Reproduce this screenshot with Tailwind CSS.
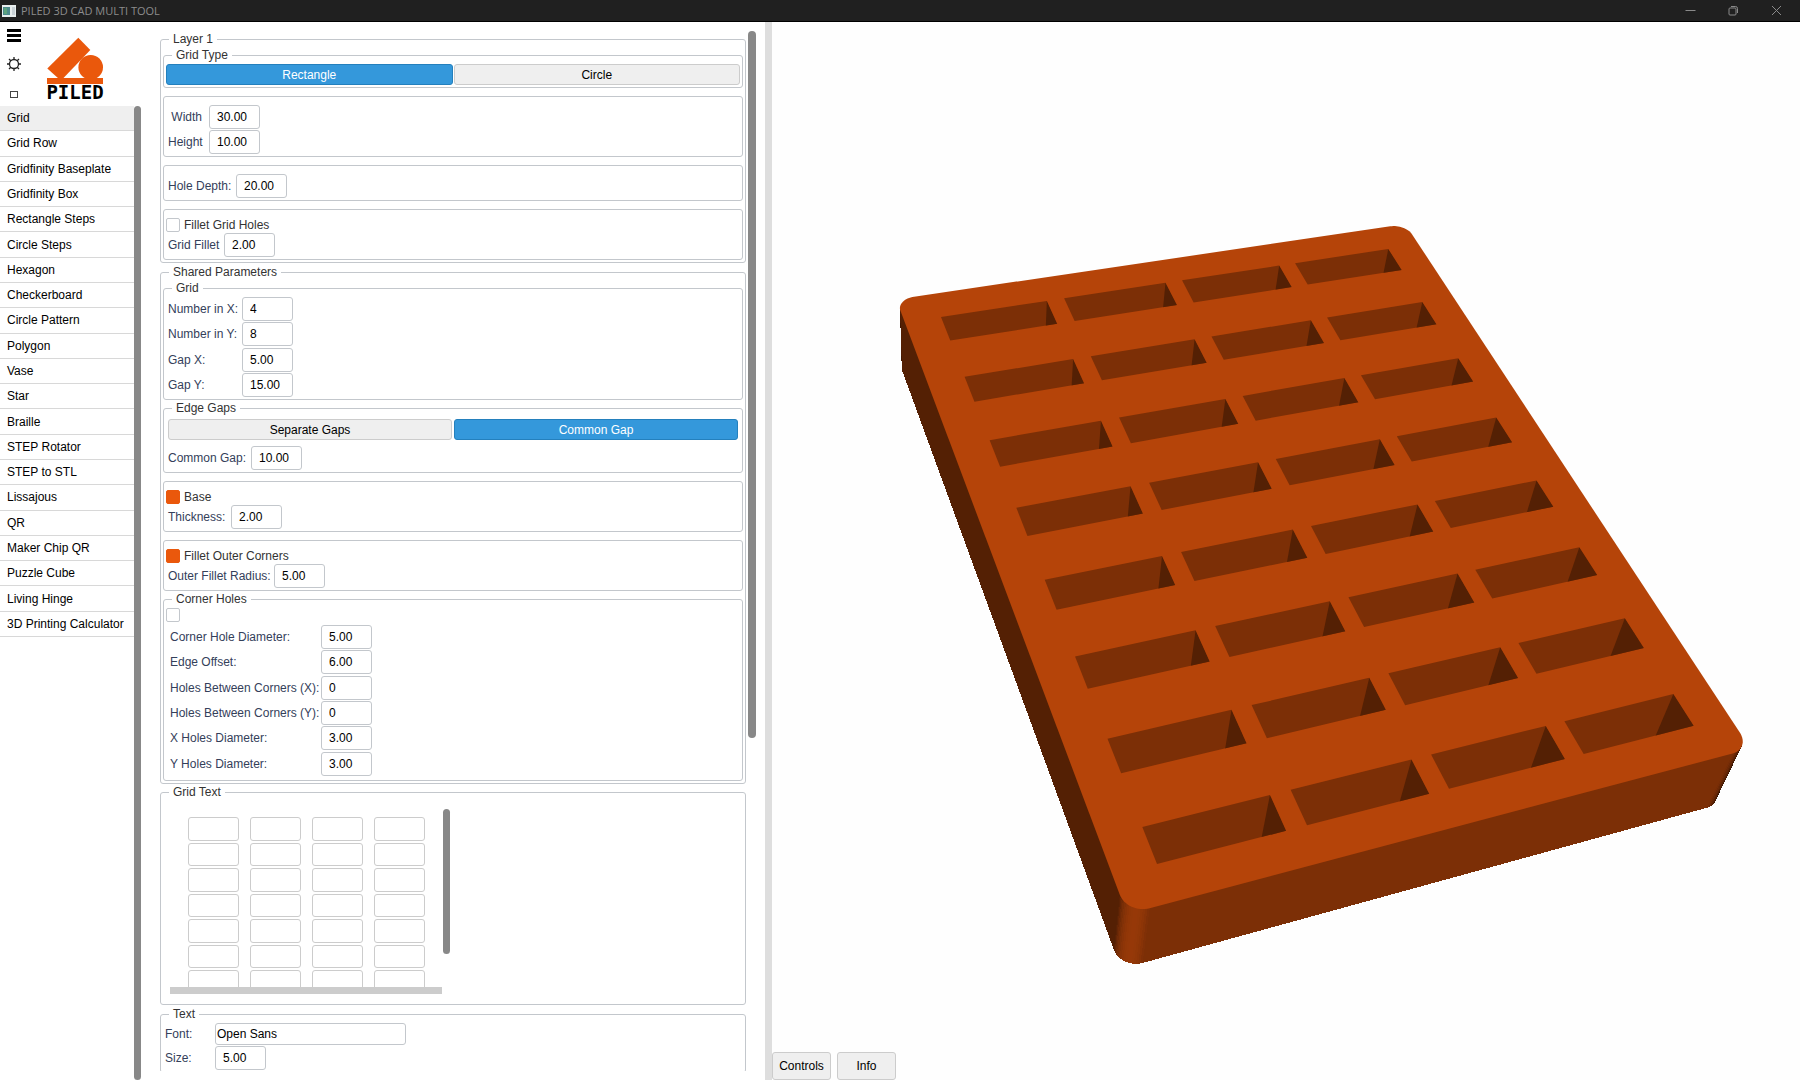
<!DOCTYPE html>
<html lang="en">
<head>
    <meta charset="UTF-8">
    <meta content="width=device-width, initial-scale=1.0" name="viewport">
    <title>PILED 3D CAD MULTI TOOL</title>
    <script src="https://cdn.jsdelivr.net/npm/@tailwindcss/browser@4"></script>
</head>
<body class="flex flex-col h-screen overflow-hidden bg-white text-black text-[12px] leading-[14px] font-['Liberation_Sans',Arial,sans-serif]">
<header class="flex items-center justify-between h-[22px] shrink-0 bg-[#202020] border-b border-black">
    <div class="flex items-center gap-[5px] pl-[2px]">
        <svg class="w-[14px] h-[12px]" viewBox="0 0 14 12">
            <rect width="14" height="12" fill="#e8eeee"/>
            <rect x="1" y="2" width="7" height="8" fill="#4d8a8c"/>
            <rect x="2" y="3" width="3" height="6" fill="#5da37d"/>
            <rect x="10" y="2" width="3" height="8" fill="#c9d2d6"/>
        </svg>
        <h1 class="text-[#8c8c8c] text-[11px] font-['Open_Sans',sans-serif]">PILED 3D CAD MULTI TOOL</h1>
    </div>
    <div class="flex pr-[2px] text-[#8a8a8a]">
        <button aria-label="Minimize" class="w-[43px] flex justify-center">
            <svg class="size-[11px]" viewBox="0 0 11 11" fill="none" stroke="currentColor"><path d="M0.5 5.500h10"/></svg>
        </button>
        <button aria-label="Restore" class="w-[43px] flex justify-center">
            <svg class="size-[11px]" viewBox="0 0 11 11" fill="none" stroke="currentColor"><rect x="1" y="3" width="7" height="7" rx="1"/><path d="M3 1.500h4.500a2 2 0 0 1 2 2v4.500"/></svg>
        </button>
        <button aria-label="Close" class="w-[43px] flex justify-center">
            <svg class="size-[11px]" viewBox="0 0 11 11" fill="none" stroke="currentColor"><path d="M1 1l9 9M10 1l-9 9"/></svg>
        </button>
    </div>
</header>

<div class="flex flex-1 min-h-0">
    <!-- Sidebar -->
    <aside class="w-[142px] shrink-0 flex flex-col">
        <div class="flex h-[84px] shrink-0">
            <div class="flex flex-col items-center w-7">
                <button aria-label="Menu" class="h-[26px] pt-[2px]">
                    <svg class="w-[14px] h-[14px]" viewBox="0 0 14 14"><path d="M0 0h14v3H0zM0 5h14v3H0zM0 10h14v3H0z"/></svg>
                </button>
                <button aria-label="Theme" class="h-[32px]">
                    <svg class="size-[14px]" viewBox="0 0 14 14" fill="none" stroke="#222" stroke-width="1.300"><circle cx="7" cy="7" r="4.500"/><path d="M7 0v2.500M7 11.500v2.500M0 7h2.500M11.500 7h2.500M2 2l1.800 1.800M10.200 10.200L12 12M12 2l-1.800 1.800M3.800 10.200L2 12"/></svg>
                </button>
                <button aria-label="Window" class="h-[26px] pt-[2px]">
                    <svg class="w-[8px] h-[7px]" viewBox="0 0 8 7" fill="none" stroke="#444"><rect x="0.5" y="0.5" width="7" height="6"/></svg>
                </button>
            </div>
            <svg class="w-[60px] h-[66px] ml-[17px] mt-[14px]" viewBox="45 36 60 66">
                <g fill="#ea580c">
                    <path d="M78.300 37.700L90.300 50 63 78.500H58.500L47.300 68.500z"/>
                    <circle cx="90.700" cy="67.300" r="12.300"/>
                    <rect x="47" y="78" width="56" height="6"/>
                </g>
                <text x="75" y="99" text-anchor="middle" font-family="DejaVu Sans Mono, monospace" font-weight="bold" font-size="19">PILED</text>
            </svg>
        </div>
        <div class="flex flex-1 min-h-0">
            <ul class="grid h-[531px] flex-1 auto-rows-fr" id="toolList"></ul>
            <div class="w-[7px] mr-px rounded-full bg-[#888]"></div>
        </div>
    </aside>

    <!-- Parameters -->
    <main class="w-[623px] shrink-0 flex pl-[18px] pt-[9px] pb-[9px] gap-[2px]">
        <form class="w-[586px] h-full overflow-hidden pt-px">
            <fieldset class="border border-[#c3c7cc] rounded-[3px] px-[2px] pt-[2px] pb-[2px]">
                <legend class="ml-[6px] px-[4px] text-[#333]">Layer 1</legend>
                <fieldset class="border border-[#c3c7cc] rounded-[3px] px-[2px] pt-[2px] pb-[2px]">
                    <legend class="ml-[6px] px-[4px] text-[#333]">Grid Type</legend>
                    <div class="grid grid-cols-2 gap-px">
                        <button type="button" aria-pressed="true" class="h-[21px] rounded-[3px] border border-[#2480bd] bg-[#3498db] text-white">Rectangle</button>
                        <button type="button" aria-pressed="false" class="h-[21px] rounded-[3px] border border-[#ccc] bg-[#efefef]">Circle</button>
                    </div>
                </fieldset>
                <div class="mt-2 border border-[#c3c7cc] rounded-[3px] px-[4px] pt-2 pb-[2px] grid gap-px">
                    <div class="flex items-center gap-[7px]">
                        <label for="width" class="w-[34px] text-right text-[#34405a]">Width</label>
                        <input id="width" value="30.00" class="w-[51px] h-6 pl-[7px] border border-[#c3c7cc] rounded-[3px]">
                    </div>
                    <div class="flex items-center gap-[7px]">
                        <label for="height" class="w-[34px] text-[#34405a]">Height</label>
                        <input id="height" value="10.00" class="w-[51px] h-6 pl-[7px] border border-[#c3c7cc] rounded-[3px]">
                    </div>
                </div>
                <div class="mt-2 border border-[#c3c7cc] rounded-[3px] px-[4px] pt-2 pb-[2px] flex items-center">
                    <label for="depth" class="w-[68px] text-[#34405a]">Hole Depth:</label>
                    <input id="depth" value="20.00" class="w-[51px] h-6 pl-[7px] border border-[#c3c7cc] rounded-[3px]">
                </div>
                <div class="mt-2 border border-[#c3c7cc] rounded-[3px] px-[2px] pt-2 pb-[2px] grid gap-px">
                    <div class="flex items-center gap-[4px]">
                        <input id="filletHoles" type="checkbox" class="appearance-none size-[14px] border border-[#c3c7cc] rounded-[2px] checked:bg-[#ea580c] checked:border-[#ea580c]">
                        <label for="filletHoles" class="text-[#333]">Fillet Grid Holes</label>
                    </div>
                    <div class="flex items-center pl-[2px]">
                        <label for="gridFillet" class="w-[56px] text-[#34405a]">Grid Fillet</label>
                        <input id="gridFillet" value="2.00" class="w-[51px] h-6 pl-[7px] border border-[#c3c7cc] rounded-[3px]">
                    </div>
                </div>
            </fieldset>

            <fieldset class="mt-[2px] border border-[#c3c7cc] rounded-[3px] px-[2px] pt-[2px] pb-[2px]">
                <legend class="ml-[6px] px-[4px] text-[#333]">Shared Parameters</legend>
                <fieldset class="border border-[#c3c7cc] rounded-[3px] px-[4px] pt-[2px] pb-[2px]">
                    <legend class="ml-[4px] px-[4px] text-[#333]">Grid</legend>
                    <div class="grid grid-cols-[74px_51px] auto-rows-fr h-[100px] gap-y-px items-center">
                        <label for="numX" class="text-[#34405a]">Number in X:</label>
                        <input id="numX" value="4" class="h-6 pl-[7px] border border-[#c3c7cc] rounded-[3px]">
                        <label for="numY" class="text-[#34405a]">Number in Y:</label>
                        <input id="numY" value="8" class="h-6 pl-[7px] border border-[#c3c7cc] rounded-[3px]">
                        <label for="gapX" class="text-[#34405a]">Gap X:</label>
                        <input id="gapX" value="5.00" class="h-6 pl-[7px] border border-[#c3c7cc] rounded-[3px]">
                        <label for="gapY" class="text-[#34405a]">Gap Y:</label>
                        <input id="gapY" value="15.00" class="h-6 pl-[7px] border border-[#c3c7cc] rounded-[3px]">
                    </div>
                </fieldset>
                <fieldset class="mt-px border border-[#c3c7cc] rounded-[3px] px-[4px] pt-[4px] pb-[2px]">
                    <legend class="ml-[4px] px-[4px] text-[#333]">Edge Gaps</legend>
                    <div class="grid grid-cols-2 gap-[2px]">
                        <button type="button" aria-pressed="false" class="h-[21px] rounded-[3px] border border-[#ccc] bg-[#efefef]">Separate Gaps</button>
                        <button type="button" aria-pressed="true" class="h-[21px] rounded-[3px] border border-[#2480bd] bg-[#3498db] text-white">Common Gap</button>
                    </div>
                    <div class="flex items-center mt-[6px]">
                        <label for="commonGap" class="w-[83px] text-[#34405a]">Common Gap:</label>
                        <input id="commonGap" value="10.00" class="w-[51px] h-6 pl-[7px] border border-[#c3c7cc] rounded-[3px]">
                    </div>
                </fieldset>
                <div class="mt-2 border border-[#c3c7cc] rounded-[3px] px-[2px] pt-2 pb-[2px] grid gap-px">
                    <div class="flex items-center gap-[4px]">
                        <input id="base" type="checkbox" checked class="appearance-none size-[14px] border border-[#c3c7cc] rounded-[2px] checked:bg-[#ea580c] checked:border-[#ea580c]">
                        <label for="base" class="text-[#333]">Base</label>
                    </div>
                    <div class="flex items-center pl-[2px]">
                        <label for="thickness" class="w-[63px] text-[#34405a]">Thickness:</label>
                        <input id="thickness" value="2.00" class="w-[51px] h-6 pl-[7px] border border-[#c3c7cc] rounded-[3px]">
                    </div>
                </div>
                <div class="mt-2 border border-[#c3c7cc] rounded-[3px] px-[2px] pt-2 pb-[2px] grid gap-px">
                    <div class="flex items-center gap-[4px]">
                        <input id="filletOuter" type="checkbox" checked class="appearance-none size-[14px] border border-[#c3c7cc] rounded-[2px] checked:bg-[#ea580c] checked:border-[#ea580c]">
                        <label for="filletOuter" class="text-[#333]">Fillet Outer Corners</label>
                    </div>
                    <div class="flex items-center pl-[2px]">
                        <label for="outerRadius" class="w-[106px] text-[#34405a]">Outer Fillet Radius:</label>
                        <input id="outerRadius" value="5.00" class="w-[51px] h-6 pl-[7px] border border-[#c3c7cc] rounded-[3px]">
                    </div>
                </div>
                <fieldset class="mt-px border border-[#c3c7cc] rounded-[3px] px-[2px] pt-[2px] pb-[4px]">
                    <legend class="ml-[6px] px-[4px] text-[#333]">Corner Holes</legend>
                    <input aria-label="Corner Holes" type="checkbox" class="block appearance-none size-[14px] border border-[#c3c7cc] rounded-[2px] checked:bg-[#ea580c] checked:border-[#ea580c]">
                    <div class="grid grid-cols-[151px_51px] auto-rows-fr h-[151px] gap-y-px items-center mt-[3px] pl-[4px]">
                        <label for="holeDia" class="text-[#34405a]">Corner Hole Diameter:</label>
                        <input id="holeDia" value="5.00" class="h-6 pl-[7px] border border-[#c3c7cc] rounded-[3px]">
                        <label for="edgeOffset" class="text-[#34405a]">Edge Offset:</label>
                        <input id="edgeOffset" value="6.00" class="h-6 pl-[7px] border border-[#c3c7cc] rounded-[3px]">
                        <label for="betweenX" class="text-[#34405a]">Holes Between Corners (X):</label>
                        <input id="betweenX" value="0" class="h-6 pl-[7px] border border-[#c3c7cc] rounded-[3px]">
                        <label for="betweenY" class="text-[#34405a]">Holes Between Corners (Y):</label>
                        <input id="betweenY" value="0" class="h-6 pl-[7px] border border-[#c3c7cc] rounded-[3px]">
                        <label for="diaX" class="text-[#34405a]">X Holes Diameter:</label>
                        <input id="diaX" value="3.00" class="h-6 pl-[7px] border border-[#c3c7cc] rounded-[3px]">
                        <label for="diaY" class="text-[#34405a]">Y Holes Diameter:</label>
                        <input id="diaY" value="3.00" class="h-6 pl-[7px] border border-[#c3c7cc] rounded-[3px]">
                    </div>
                </fieldset>
            </fieldset>

            <fieldset class="mt-px border border-[#c3c7cc] rounded-[3px] pl-[9px] pt-[10px] pb-[10px]">
                <legend class="-ml-px px-[4px] text-[#333]">Grid Text</legend>
                <div class="flex">
                    <div class="w-[273px] h-[178px] overflow-hidden pt-2 pl-[18px]">
                        <div class="grid grid-cols-[repeat(4,51px)] auto-rows-fr gap-x-[11px] gap-y-[2px] h-[202px]" id="gridText"></div>
                    </div>
                    <div class="w-[7px] h-[145px] rounded-full bg-[#888]"></div>
                </div>
                <div class="w-[272px] h-[7px] bg-[#ccc]"></div>
            </fieldset>

            <fieldset class="mt-[2px] border border-[#c3c7cc] rounded-[3px] px-[4px] pt-[2px] pb-[2px]">
                <legend class="ml-[4px] px-[4px] text-[#333]">Text</legend>
                <div class="grid grid-cols-[50px_191px] gap-y-px items-center">
                    <label for="font" class="text-[#34405a]">Font:</label>
                    <select id="font" class="appearance-none h-[22px] pl-px border border-[#c3c7cc] rounded-[3px]">
                        <option>Open Sans</option>
                    </select>
                    <label for="size" class="text-[#34405a]">Size:</label>
                    <input id="size" value="5.00" class="w-[51px] h-6 pl-[7px] border border-[#c3c7cc] rounded-[3px]">
                </div>
            </fieldset>
        </form>
        <div class="w-2 h-[68%] rounded-full bg-[#888]"></div>
    </main>

    <div class="w-[7px] shrink-0 bg-[#dedede]"></div>

    <!-- 3D view -->
    <section class="flex-1 min-w-0 flex flex-col bg-[#fefefe]">
        <svg class="flex-1 min-h-0 w-full" viewBox="772 22 1028 1030" id="model"></svg>
        <div class="flex gap-[6px] h-7">
            <button class="w-[59px] rounded-[3px] border border-[#ccc] bg-[#efefef]">Controls</button>
            <button class="w-[59px] rounded-[3px] border border-[#ccc] bg-[#efefef]">Info</button>
        </div>
    </section>
</div>

<script>
    const tools = ['Grid', 'Grid Row', 'Gridfinity Baseplate', 'Gridfinity Box', 'Rectangle Steps', 'Circle Steps',
        'Hexagon', 'Checkerboard', 'Circle Pattern', 'Polygon', 'Vase', 'Star', 'Braille', 'STEP Rotator', 'STEP to STL',
        'Lissajous', 'QR', 'Maker Chip QR', 'Puzzle Cube', 'Living Hinge', '3D Printing Calculator'];

    document.getElementById('toolList').innerHTML = tools.map((name, i) => `
        <li class="border-b border-[#d8d8d8] ${i === 0 ? 'bg-[#efefef]' : ''}">
            <button class="w-full h-full pl-[7px] text-left whitespace-nowrap">${name}</button>
        </li>`).join('');

    const gridText = document.getElementById('gridText');
    for (let row = 1; row <= 8; row++) {
        for (let col = 1; col <= 4; col++) {
            let cell = document.createElement('input');
            cell.ariaLabel = `Text row ${row} column ${col}`;
            cell.className = 'w-full h-full border border-[#ccc] rounded-[3px]';
            gridText.appendChild(cell);
        }
    }

    // Model: x to the right, y towards the viewer, z = 1 at the bottom of the body
    const width = 155, length = 205, radius = 5;

    function project(x, y, z = 0) {
        const u = (x - 10) / 135, v = (y - 10) / 185, t = z * 0.03;
        const w = 1 + 0.0851 * u - 0.215 * v + t;
        return [
            (941 + 565.44 * u - 32.76 * v + 962 * t) / w,
            (317 - 46.81 * u + 361.24 * v + 2369 * t) / w
        ];
    }

    function shade(k) {
        return `rgb(${Math.round(234 * k)},${Math.round(88 * k)},${Math.round(12 * k)})`;
    }

    function polygon(points, fill, extra = '') {
        return `<polygon points="${points.map(p => p.join(',')).join(' ')}" fill="${fill}" ${extra}/>`;
    }

    // Rounded outline of the body, starting at the far right corner
    const outline = [];
    const corners = [[width - radius, radius, -90], [width - radius, length - radius, 0], [radius, length - radius, 90], [radius, radius, 180]];
    for (const [cx, cy, start] of corners) {
        for (let i = 0; i <= 16; i++) {
            const a = (start + i * 90 / 16) * Math.PI / 180;
            outline.push([cx + radius * Math.cos(a), cy + radius * Math.sin(a), a]);
        }
    }

    let svg = '';
    for (let i = 0; i < outline.length - 1; i++) {
        const [x, y, a] = outline[i];
        const [x2, y2, a2] = outline[i + 1];
        // walls start slightly above the top face so that no gap shows along the edge
        const p = project(x, y, -0.03), q = project(x2, y2, -0.03), r = project(x2, y2, 1), s = project(x, y, 1);
        // skip the walls that face away
        if ((q[0] - p[0]) * (s[1] - p[1]) - (q[1] - p[1]) * (s[0] - p[0]) >= 0) continue;
        const mid = (a + a2) / 2;
        const color = shade(Math.max(0, Math.sin(mid) * 0.53 - Math.cos(mid) * 0.36));
        svg += polygon([p, q, r, s], color, 'shape-rendering="crispEdges"');
    }
    svg += polygon(outline.map(([x, y]) => project(x, y)), shade(0.775));

    for (let row = 0; row < 8; row++) {
        for (let col = 0; col < 4; col++) {
            const x = 10 + col * 35, y = 10 + row * 25, id = `hole${row}${col}`;
            const hole = [project(x, y), project(x + 30, y), project(x + 30, y + 10), project(x, y + 10)];
            svg += `<clipPath id="${id}">${polygon(hole, '#000')}</clipPath>`;
            svg += polygon(hole, shade(0.53));
            // right wall, only the part seen through the opening
            svg += polygon([project(x + 30, y), project(x + 30, y + 10), project(x + 30, y + 10, 1), project(x + 30, y, 1)], shade(0.36), `clip-path="url(#${id})"`);
        }
    }
    document.getElementById('model').innerHTML = svg;
</script>
</body>
</html>
